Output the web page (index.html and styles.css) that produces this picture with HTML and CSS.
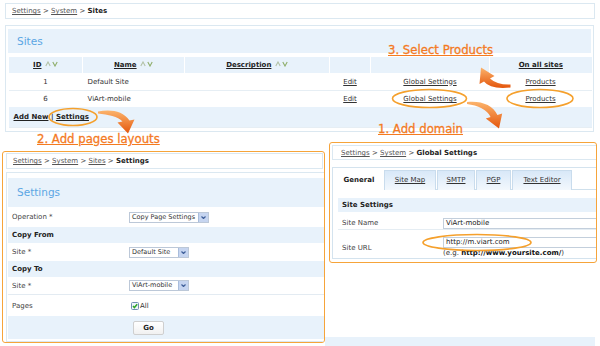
FILE: index.html
```html
<!DOCTYPE html>
<html>
<head>
  <meta charset="utf-8">
  <title>Sites setup</title>
  <link rel="stylesheet" href="styles.css">
</head>
<body>

<div class="page">
  <div class="crumbs"><a>Settings</a> &gt; <a>System</a> &gt; <b>Sites</b></div>

  <div class="block sites">
    <div class="block-title">Sites</div>
    <table class="grid">
      <tr class="head">
        <th class="c-id"><a>ID</a> <svg class="sort" width="13" height="6" viewBox="0 0 13 6"><path class="up" d="M0.8 5 L3 1 L5.2 5"/><path class="down" d="M7.8 1 L10 5 L12.2 1"/></svg></th>
        <th class="c-name"><a>Name</a> <svg class="sort" width="13" height="6" viewBox="0 0 13 6"><path class="up" d="M0.8 5 L3 1 L5.2 5"/><path class="down" d="M7.8 1 L10 5 L12.2 1"/></svg></th>
        <th class="c-desc"><a>Description</a> <svg class="sort" width="13" height="6" viewBox="0 0 13 6"><path class="up" d="M0.8 5 L3 1 L5.2 5"/><path class="down" d="M7.8 1 L10 5 L12.2 1"/></svg></th>
        <th class="c-edit"></th>
        <th class="c-global"></th>
        <th class="c-all"><a>On all sites</a></th>
      </tr>
      <tr>
        <td class="center">1</td>
        <td>Default Site</td>
        <td></td>
        <td class="center"><a>Edit</a></td>
        <td class="center"><a>Global Settings</a></td>
        <td class="center"><a>Products</a></td>
      </tr>
      <tr class="last">
        <td class="center">6</td>
        <td>ViArt-mobile</td>
        <td></td>
        <td class="center"><a>Edit</a></td>
        <td class="center"><a>Global Settings</a></td>
        <td class="center"><a>Products</a></td>
      </tr>
      <tr class="foot">
        <td colspan="6"><a>Add New</a> | <a>Settings</a></td>
      </tr>
    </table>
  </div>

  <div class="page-foot"></div>
</div>

<!-- step 2: copy page layouts -->
<div class="shot shot-layouts">
  <div class="crumbs"><a>Settings</a> &gt; <a>System</a> &gt; <a>Sites</a> &gt; <b>Settings</b></div>
  <div class="block form">
    <div class="block-title">Settings</div>
    <div class="frow row-op">
      <span>Operation *</span>
      <div class="select"><span class="select-val">Copy Page Settings</span><span class="select-btn"><svg width="5" height="3" viewBox="0 0 5 3"><path d="M0.5 0.5 L2.5 2.5 L4.5 0.5"/></svg></span></div>
    </div>
    <div class="frow sect">Copy From</div>
    <div class="frow row-site">
      <span>Site *</span>
      <div class="select select-site"><span class="select-val">Default Site</span><span class="select-btn"><svg width="5" height="3" viewBox="0 0 5 3"><path d="M0.5 0.5 L2.5 2.5 L4.5 0.5"/></svg></span></div>
    </div>
    <div class="frow sect">Copy To</div>
    <div class="frow row-site row-line">
      <span>Site *</span>
      <div class="select select-site"><span class="select-val">ViArt-mobile</span><span class="select-btn"><svg width="5" height="3" viewBox="0 0 5 3"><path d="M0.5 0.5 L2.5 2.5 L4.5 0.5"/></svg></span></div>
    </div>
    <div class="frow row-pages">
      <span>Pages</span>
      <label class="check"><svg width="8" height="8" viewBox="0 0 8 8"><rect x="0.5" y="0.5" width="7" height="7" rx="1" class="box"/><path d="M2 4 L3.4 5.6 L6.2 2.2" class="tick"/></svg>All</label>
    </div>
    <div class="frow row-go">
      <span></span>
      <span class="btn">Go</span>
    </div>
  </div>
</div>

<!-- step 1: site domain -->
<div class="shot shot-global">
  <div class="crumbs"><a>Settings</a> &gt; <a>System</a> &gt; <b>Global Settings</b></div>
  <div class="tabbox">
    <div class="tabs">
      <span class="tab tab-general active">General</span>
      <a class="tab tab-map">Site Map</a>
      <a class="tab tab-smtp">SMTP</a>
      <a class="tab tab-pgp">PGP</a>
      <a class="tab tab-editor">Text Editor</a>
    </div>
    <div class="tab-body">
      <div class="sect sect-site">Site Settings</div>
      <div class="grow row-name">
        <span>Site Name</span>
        <div class="input">ViArt-mobile</div>
      </div>
      <div class="grow row-url">
        <span>Site URL</span>
        <div>
          <div class="input">http://m.viart.com</div>
          <div class="hint">(e.g. <b>http://www.yoursite.com/</b>)</div>
        </div>
      </div>
    </div>
  </div>
</div>

<!-- annotations -->
<svg class="marks" width="600" height="346" viewBox="0 0 600 346">
  <defs>
    <linearGradient id="arrow-fill" x1="0" y1="0" x2="0" y2="1">
      <stop offset="0" stop-color="#fcb46c"/>
      <stop offset="1" stop-color="#e4560c"/>
    </linearGradient>
  </defs>
  <ellipse cx="73" cy="117" rx="24" ry="8.5"/>
  <ellipse cx="429.5" cy="98.5" rx="37" ry="9"/>
  <ellipse cx="540" cy="98.5" rx="33" ry="9"/>
  <ellipse cx="477" cy="242.5" rx="54" ry="8"/>
  <path class="arrow" d="M98 111.5 C111 109 123 111 129.5 120.4 L134.5 119.4 L128 133.5 L117.5 122.6 L122.5 121.6 C118 116.5 108 114.5 98 113.5 Z"/>
  <path class="arrow" d="M510.5 84.5 Q497 85 490 78.4 L494.5 76 L481 67.5 L479.5 84 L484 81.6 Q490 89.5 510.5 87.5 Z"/>
  <path class="arrow" d="M467 102 C481 100.5 493 105 497.4 115 L502.2 113.6 L499 128.5 L485.8 118.4 L490.6 117 C487 109.5 478 105.5 467 104 Z"/>
</svg>

<div class="note note-products">3. Select Products</div>
<div class="note note-layouts">2. Add pages layouts</div>
<div class="note note-domain">1. Add domain</div>

</body>
</html>
```

FILE: styles.css
```css
* {
  box-sizing: border-box;
  margin: 0;
  padding: 0;
}

:root {
  --line: #dbe8f1;
  --pale: #e8f2fb;
  --orange: #f47a1f;
  --ring: #f5a02c;
}

body {
  position: relative;
  width: 600px;
  height: 346px;
  overflow: hidden;
  background: #fff;
  font-family: "DejaVu Sans", Verdana, sans-serif;
  font-size: 7px;
  color: #333;
}

a {
  color: #333;
  text-decoration: underline;
}

.page {
  padding: 3px 5px 0 5px;
}

.crumbs {
  height: 16px;
  line-height: 15px;
  padding-left: 6px;
  border: 1px solid var(--line);
  white-space: nowrap;
  color: #444;
}

.crumbs a {
  color: #555;
}

.crumbs b {
  color: #222;
}

.block {
  border: 1px solid var(--line);
}

.block-title {
  height: 24px;
  line-height: 25px;
  padding-left: 9px;
  background: var(--pale);
  color: #5ba6e4;
  font-size: 10.5px;
}

/* sites list */
.sites {
  margin: 6px 1px 0 0;
  padding: 3px 2px;
}

.grid {
  width: 583px;
  margin-top: 4px;
  border-collapse: collapse;
  table-layout: fixed;
}

.grid th {
  height: 16px;
  background: var(--pale);
  border-left: 1px solid #fff;
  text-align: center;
  white-space: nowrap;
}

.grid th a {
  color: #222;
}

.c-id { width: 74px; }
.c-name { width: 102px; }
.c-desc { width: 145px; }
.c-edit { width: 41px; }
.c-global { width: 119px; }
.c-all { width: 102px; }

.sort {
  vertical-align: 0;
  margin-left: 1px;
}

.sort path {
  fill: none;
  stroke-width: 1.1;
}

.sort .up { stroke: #b3c2a6; }
.sort .down { stroke: #8fae6a; }

.grid td {
  height: 17px;
  padding: 1px 0 0 5px;
  border-bottom: 1px solid #e6eef4;
  white-space: nowrap;
}

.grid td.center {
  padding-left: 0;
  text-align: center;
}

.grid tr.last td {
  border-bottom: none;
}

.grid tr.foot td {
  height: 20px;
  background: var(--pale);
  font-weight: bold;
}

.grid tr.foot a {
  color: #222;
}

.page-foot {
  width: 270px;
  height: 9px;
  margin: 205px 0 0 320px;
  background: var(--pale);
}

/* pasted screenshots */
.shot {
  position: absolute;
  background: #fff;
  border: 1px solid #f6a43a;
  border-radius: 3px;
  overflow: hidden;
}

.shot-layouts {
  left: 2px;
  top: 151px;
  width: 323px;
  height: 192px;
  padding: 1px 0 0 3px;
}

.shot-layouts .crumbs {
  margin-right: 1px;
}

.form {
  margin: 3px -6px 0 0;
  padding: 5px 0 2px 1px;
}

.form .block-title {
  height: 29px;
  line-height: 29px;
}

.frow {
  display: grid;
  grid-template-columns: 117px 1fr;
  align-items: center;
  padding-left: 4px;
  white-space: nowrap;
}

.frow > span:first-child {
  color: #444;
}

.sect {
  background: var(--pale);
  font-weight: bold;
  color: #222;
}

.frow.sect {
  display: block;
  height: 16px;
  line-height: 16px;
}

.row-op { height: 20px; }
.row-site { height: 18px; }
.row-line { border-bottom: 1px solid #e3ebf2; }
.row-pages { height: 21px; }

.row-go {
  height: 23px;
  background: var(--pale);
}

.select {
  display: inline-flex;
  align-items: center;
  justify-self: start;
  height: 11px;
  border: 1px solid #bcc8d8;
  background: #fff;
  font-size: 6.5px;
}

.select-site {
  width: 60px;
}

.select-val {
  flex: 1;
  padding: 0 3px 0 2px;
  line-height: 9px;
}

.select-btn {
  display: flex;
  align-items: center;
  justify-content: center;
  width: 10px;
  height: 9px;
  background: #c6d5f0;
  border-left: 1px solid #a9bddc;
}

.select-btn path {
  fill: none;
  stroke: #3f5f99;
  stroke-width: 1.2;
}

.check {
  display: flex;
  align-items: center;
  gap: 1px;
  margin-left: 2px;
}

.check .box {
  fill: #eef4fa;
  stroke: #6f8fb3;
}

.check .tick {
  fill: none;
  stroke: #2fa62a;
  stroke-width: 1.5;
}

.btn {
  justify-self: start;
  width: 31px;
  height: 14px;
  margin-left: 4px;
  line-height: 12px;
  text-align: center;
  font-weight: bold;
  color: #222;
  border: 1px solid #cfcfcf;
  border-radius: 2px;
  background: linear-gradient(#fff, #f1f1f1);
}

.shot-global {
  left: 329px;
  top: 142px;
  width: 268px;
  height: 121px;
  padding: 2px 0 0 2px;
}

.shot-global .crumbs {
  height: 15px;
  line-height: 14px;
  padding-left: 8px;
  margin-right: -4px;
}

.tabbox {
  height: 92px;
  margin: 7px -10px 0 0;
  border: 1px solid #d4e3ee;
  padding: 2px 0 0 1px;
}

.tabs {
  display: flex;
  height: 20px;
  border-bottom: 1px solid #cfe0ec;
}

.tab {
  height: 20px;
  line-height: 19px;
  text-align: center;
  white-space: nowrap;
  color: #333;
  border: 1px solid #c9dced;
  border-bottom: none;
  background: linear-gradient(#d8e8f8, #f3f8fd);
}

.tab.active {
  height: 21px;
  font-weight: bold;
  color: #222;
  background: #fff;
  border-color: transparent;
}

.tab-general { width: 50px; }
.tab-map { width: 52px; }
.tab-smtp { width: 38px; margin-left: 1px; }
.tab-pgp { width: 35px; margin-left: 1px; }
.tab-editor { width: 60px; margin-left: 1px; }

.tab-body {
  padding: 8px 0 0 4px;
}

.sect-site {
  height: 14px;
  line-height: 15px;
  padding-left: 4px;
}

.grow {
  display: grid;
  grid-template-columns: 101px 1fr;
  align-items: center;
  padding-left: 4px;
  white-space: nowrap;
}

.grow > span {
  color: #444;
}

.row-name {
  height: 18px;
  padding-top: 5px;
  border-bottom: 1px solid #e5edf3;
}

.row-url {
  height: 28px;
  padding-top: 7px;
  padding-bottom: 1px;
}

.input {
  height: 11px;
  line-height: 9px;
  padding-left: 2px;
  border: 1px solid #c3cfdc;
  background: #fff;
  color: #222;
}

.hint {
  height: 10px;
  line-height: 10px;
  color: #333;
}

.hint b {
  color: #111;
}

/* annotations */
.marks {
  position: absolute;
  left: 0;
  top: 0;
  pointer-events: none;
}

.marks ellipse {
  fill: none;
  stroke: var(--ring);
  stroke-width: 1.6;
}

.marks .arrow {
  fill: url(#arrow-fill);
}

.note {
  position: absolute;
  font-size: 11.7px;
  line-height: 1;
  color: var(--orange);
  -webkit-text-stroke: 0.3px var(--orange);
  text-decoration: underline;
  text-underline-offset: 1px;
  white-space: nowrap;
}

.note-products { left: 388px; top: 45px; }
.note-layouts { left: 37px; top: 134px; }
.note-domain { left: 378px; top: 124px; }
```
